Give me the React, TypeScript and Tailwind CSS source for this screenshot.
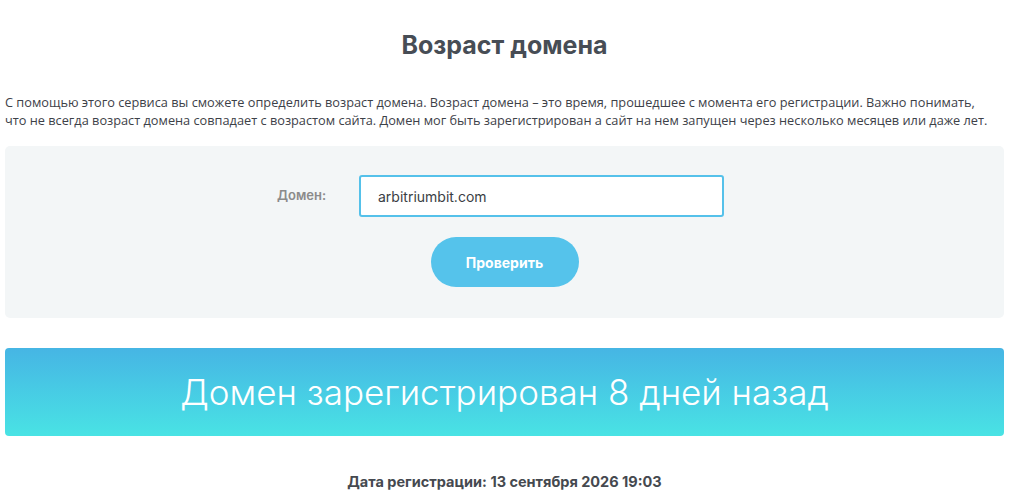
export default function App() {
  return (
    <div className="min-h-screen bg-white px-[5px] font-['Inter',sans-serif] text-[#3f434a]">
      <h1 className="pt-[30px] text-center text-[25px] font-bold leading-[30px] text-[#474d55]">
        Возраст домена
      </h1>

      <p className="mt-[33px] pr-[14px] font-['Open_Sans',sans-serif] text-[12.75px] leading-[18px] text-[#3d4148]">
        С помощью этого сервиса вы сможете определить возраст домена. Возраст домена – это время, прошедшее с момента его регистрации. Важно понимать, что не всегда возраст домена совпадает с возрастом сайта. Домен мог быть зарегистрирован а сайт на нем запущен через несколько месяцев или даже лет.
      </p>

      <div className="mt-[17px] flex flex-col items-center rounded-[5px] bg-[#f3f6f7] pb-[31px] pt-[29px]">
        <div className="flex items-center pr-[8px]">
          <label className="w-[82px] text-[13px] font-semibold text-[#8b8b8b]">Домен:</label>
          <input
            type="text"
            defaultValue="arbitriumbit.com"
            className="h-[42px] w-[365px] rounded-[3px] border-2 border-[#55c1ea] bg-white px-[17px] text-[14px] text-[#3a3e44] outline-none"
          />
        </div>
        <button className="mt-[20px] h-[50px] w-[148px] rounded-full bg-[#55c3eb] text-[14px] font-bold text-white">
          Проверить
        </button>
      </div>

      <div className="mt-[30px] flex h-[88px] items-center justify-center rounded-[4px] bg-gradient-to-b from-[#46b5e4] to-[#49e3e4]">
        <span className="text-[35px] font-light text-white">Домен зарегистрирован 8 дней назад</span>
      </div>

      <div className="mt-[35px] text-center text-[14.5px] font-bold text-[#45494f]">
        Дата регистрации: 13 сентября 2026 19:03
      </div>
    </div>
  );
}
